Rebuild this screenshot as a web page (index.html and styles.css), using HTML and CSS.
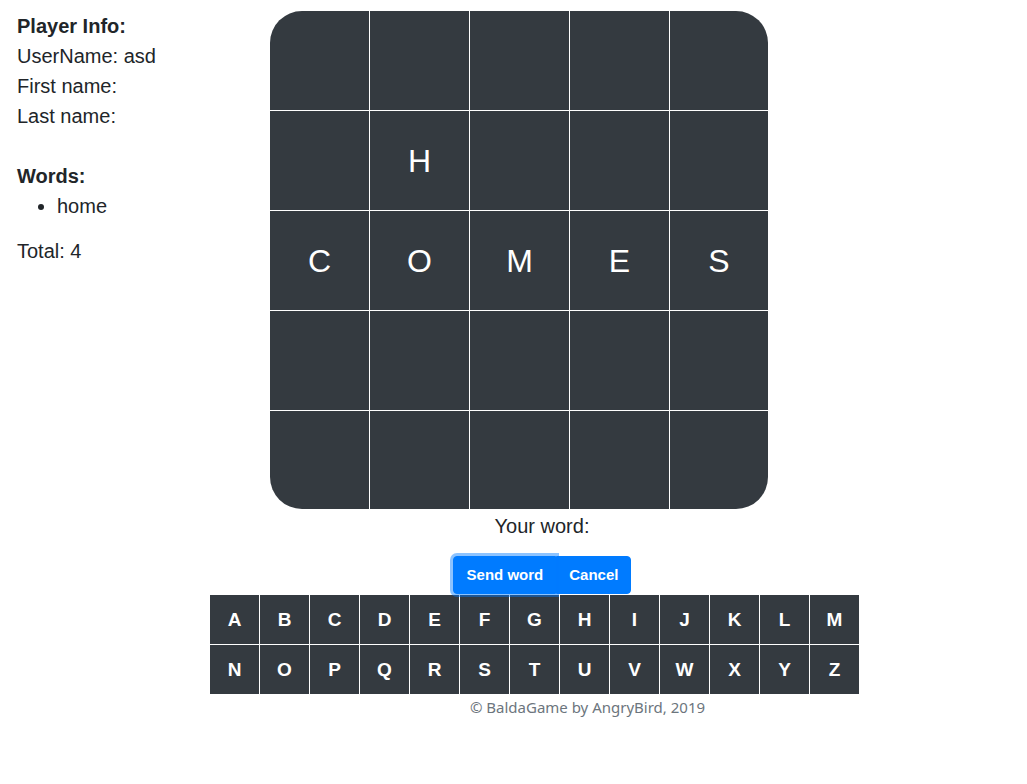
FILE: index.html
```html
<!DOCTYPE html>
<html>
<head>
<meta charset="utf-8">
<link rel="stylesheet" href="styles.css">
</head>
<body>
<div class="top">
  <aside class="info">
    <div class="bold">Player Info:</div>
    <div>UserName: asd</div>
    <div>First name:</div>
    <div>Last name:</div>
    <div class="blank"></div>
    <div class="bold">Words:</div>
    <ul class="words"><li>home</li></ul>
    <div>Total: 4</div>
  </aside>
  <div class="board">
    <div class="cell"></div><div class="cell"></div><div class="cell"></div><div class="cell"></div><div class="cell"></div>
    <div class="cell"></div><div class="cell">H</div><div class="cell"></div><div class="cell"></div><div class="cell"></div>
    <div class="cell">C</div><div class="cell">O</div><div class="cell">M</div><div class="cell">E</div><div class="cell">S</div>
    <div class="cell"></div><div class="cell"></div><div class="cell"></div><div class="cell"></div><div class="cell"></div>
    <div class="cell"></div><div class="cell"></div><div class="cell"></div><div class="cell"></div><div class="cell"></div>
  </div>
</div>
<div class="lower">
  <div class="word">Your word:</div>
  <div class="btns">
    <button class="btn send">Send word</button><button class="btn cancel">Cancel</button>
  </div>
</div>
<div class="keys">
  <div class="key">A</div><div class="key">B</div><div class="key">C</div><div class="key">D</div><div class="key">E</div><div class="key">F</div><div class="key">G</div><div class="key">H</div><div class="key">I</div><div class="key">J</div><div class="key">K</div><div class="key">L</div><div class="key">M</div>
  <div class="key">N</div><div class="key">O</div><div class="key">P</div><div class="key">Q</div><div class="key">R</div><div class="key">S</div><div class="key">T</div><div class="key">U</div><div class="key">V</div><div class="key">W</div><div class="key">X</div><div class="key">Y</div><div class="key">Z</div>
</div>
<footer class="foot">© BaldaGame by AngryBird, 2019</footer>
</body>
</html>
```
FILE: styles.css
```css
html, body { margin: 0; padding: 0; background: #fff; }
body {
  font-family: "Comic Sans MS", "Liberation Sans", Arial, sans-serif;
  color: #212529;
  font-size: 20px;
  line-height: 30px;
}
.top { display: flex; padding-top: 11px; }
.info { width: 253px; padding-left: 17px; }
.bold { font-weight: bold; }
.blank { height: 30px; }
.words { margin: 0 0 15px 0; padding-left: 40px; }
.board {
  width: 498px; height: 498px;
  display: grid;
  grid-template-columns: repeat(4, 99px) 98px;
  grid-template-rows: repeat(4, 99px) 98px;
  gap: 1px;
  background: #fff;
  border-radius: 32px;
  overflow: hidden;
}
.cell {
  background: #343a40;
  color: #fff;
  font-size: 32px;
  display: flex; align-items: center; justify-content: center;
}
.lower { padding-left: 57px; text-align: center; margin-top: 2px; }
.word { height: 30px; }
.btns { display: inline-flex; margin-top: 15px; }
.btn {
  font-family: inherit;
  font-size: 15px;
  font-weight: bold;
  line-height: 24px;
  padding: 6px 12px;
  height: 38px;
  color: #fff;
  background: #007bff;
  border: 1px solid #007bff;
  cursor: pointer;
}
.send {
  border-radius: 4px 0 0 4px;
  padding: 6px 12px 6px 13px;
  box-shadow: 0 0 0 3px rgba(0, 123, 255, 0.45);
  position: relative; z-index: 1;
}
.cancel { border-radius: 0 4px 4px 0; }
.keys {
  margin: 1px 0 0 210px;
  width: 649px;
  display: grid;
  grid-template-columns: repeat(13, 49px);
  grid-auto-rows: 49px;
  gap: 1px;
}
.key {
  background: #343a40;
  color: #fff;
  font-weight: bold;
  font-size: 19px;
  display: flex; align-items: center; justify-content: center;
}
.foot {
  padding-left: 148px;
  text-align: center;
  font-family: "Noto Sans", "Liberation Sans", sans-serif;
  font-size: 15px;
  line-height: 26px;
  color: #6c757d;
}
```
